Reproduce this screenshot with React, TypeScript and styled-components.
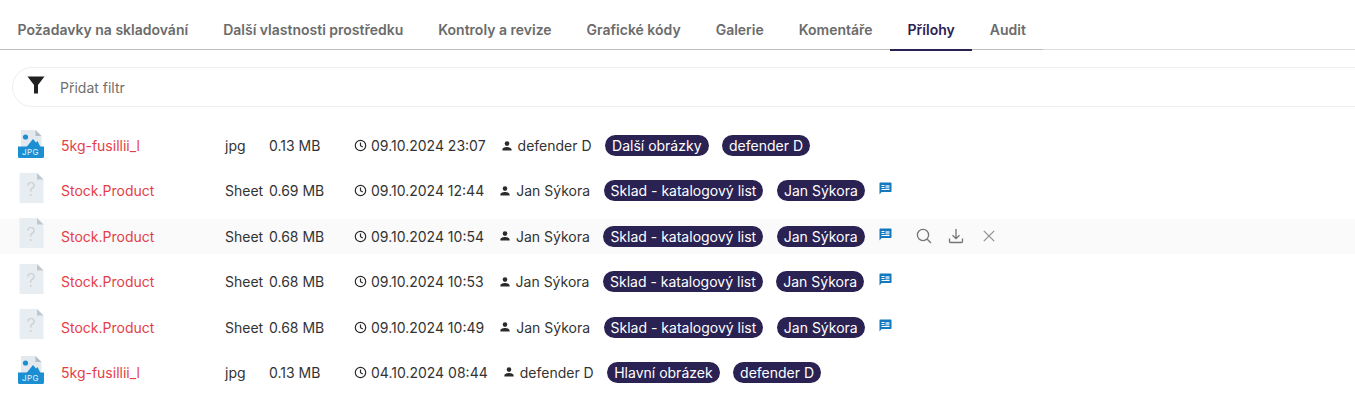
import styled, { createGlobalStyle } from 'styled-components';

const GlobalStyle = createGlobalStyle`
  html, body {
    margin: 0;
    padding: 0;
    background: #ffffff;
    overflow: hidden;
  }
  body {
    font-family: Inter, "Liberation Sans", sans-serif;
  }
`;

const tabs = [
  'Požadavky na skladování',
  'Další vlastnosti prostředku',
  'Kontroly a revize',
  'Grafické kódy',
  'Galerie',
  'Komentáře',
  'Přílohy',
  'Audit',
];

interface Attachment {
  kind: 'jpg' | 'unknown';
  name: string;
  type: string;
  size: string;
  date: string;
  author: string;
  tag: string;
  note?: boolean;
  hover?: boolean;
}

const attachments: Attachment[] = [
  { kind: 'jpg', name: '5kg-fusillii_l', type: 'jpg', size: '0.13 MB', date: '09.10.2024 23:07', author: 'defender D', tag: 'Další obrázky' },
  { kind: 'unknown', name: 'Stock.Product', type: 'Sheet', size: '0.69 MB', date: '09.10.2024 12:44', author: 'Jan Sýkora', tag: 'Sklad - katalogový list', note: true },
  { kind: 'unknown', name: 'Stock.Product', type: 'Sheet', size: '0.68 MB', date: '09.10.2024 10:54', author: 'Jan Sýkora', tag: 'Sklad - katalogový list', note: true, hover: true },
  { kind: 'unknown', name: 'Stock.Product', type: 'Sheet', size: '0.68 MB', date: '09.10.2024 10:53', author: 'Jan Sýkora', tag: 'Sklad - katalogový list', note: true },
  { kind: 'unknown', name: 'Stock.Product', type: 'Sheet', size: '0.68 MB', date: '09.10.2024 10:49', author: 'Jan Sýkora', tag: 'Sklad - katalogový list', note: true },
  { kind: 'jpg', name: '5kg-fusillii_l', type: 'jpg', size: '0.13 MB', date: '04.10.2024 08:44', author: 'defender D', tag: 'Hlavní obrázek' },
];

const FunnelIcon = () => (
  <svg width="18" height="18" viewBox="0 0 18 18">
    <path d="M0.5 0.5h17L11 9v8.5H7V9z" fill="#212121" />
  </svg>
);

const JpgIcon = () => (
  <svg width="27" height="28" viewBox="-0.5 0 27 28">
    <path d="M3.5 0h14.5l6 6v20h-20.500z" fill="#e3e9ee" />
    <path d="M18 0l6 6h-6z" fill="#b4bec6" />
    <circle cx="8" cy="7" r="2.6" fill="#1b8fd2" />
    <path d="M9 17l6.500-8 3 3.500 1.500-1.500 3 6z" fill="#1b8fd2" />
    <path d="M0.500 16.500h26v10a1.500 1.500 0 0 1-1.500 1.500h-23a1.500 1.500 0 0 1-1.500-1.500z" fill="#1b8fd2" />
    <text x="13" y="25" textAnchor="middle" fontSize="8" letterSpacing="0.5" fontFamily="Inter, sans-serif" fill="#e4f1fa">JPG</text>
  </svg>
);

const UnknownIcon = () => (
  <svg width="27" height="30" viewBox="0 0 27 30">
    <path d="M2.500 0h17.500l6.500 6.500v23.500h-24z" fill="#e8edf1" />
    <path d="M20 0l6.500 6.500h-6.500z" fill="#bfc7ce" />
    <text x="14" y="23" textAnchor="middle" fontSize="18" fontWeight="300" fontFamily="Inter, sans-serif" fill="#c9d0d6">?</text>
  </svg>
);

const ClockIcon = () => (
  <svg width="13" height="13" viewBox="0 0 13 13" fill="none" stroke="#2b2b2b" strokeWidth="1.2">
    <circle cx="6.500" cy="6.500" r="5.200" />
    <path d="M6.500 3.400v3.300l2.300 1.400" />
  </svg>
);

const PersonIcon = () => (
  <svg width="12" height="12" viewBox="0 0 12 12" fill="#2b2b2b">
    <circle cx="6" cy="3.600" r="2.300" />
    <path d="M1.400 10.500V9.400c0-1.500 3-2.300 4.600-2.300s4.600.8 4.600 2.300v1.100z" />
  </svg>
);

const NoteIcon = () => (
  <svg width="13" height="13" viewBox="0 0 13 13">
    <path d="M1.200 0.500h10.600a.7.7 0 0 1 .7.700v8a.7.7 0 0 1-.7.700H2.500L.5 12.500V1.200a.7.7 0 0 1 .7-.7z" fill="#1478bd" />
    <path d="M6.500 3h4v3.500h-4z" fill="#a9d2ee" />
    <path d="M2.500 3h3v1h-3zM2.500 5h3v1h-3zM2.500 7h8v1h-8z" fill="#ffffff" />
  </svg>
);

const SearchIcon = () => (
  <svg width="16" height="16" viewBox="0 0 16 16" fill="none" stroke="#757575" strokeWidth="1.3">
    <circle cx="7" cy="7" r="5.600" />
    <path d="M11.200 11.200l3.800 3.800" />
  </svg>
);

const DownloadIcon = () => (
  <svg width="16" height="16" viewBox="0 0 16 16" fill="none" stroke="#757575" strokeWidth="1.3">
    <path d="M8 1v9.500M4.500 7.200L8 10.700l3.500-3.500" />
    <path d="M1.500 10.500v3a1 1 0 0 0 1 1h11a1 1 0 0 0 1-1v-3" />
  </svg>
);

const CloseIcon = () => (
  <svg width="18" height="12" viewBox="-3 0 18 12" fill="none" stroke="#8f8f8f" strokeWidth="1.2">
    <path d="M.8.8l10.400 10.400M11.200.8L.8 11.200" />
  </svg>
);

const App = (): React.ReactElement => {
  return (
    <Page>
      <GlobalStyle />
      <TabBar>
        <TabStrip>
          {tabs.map(tab => (
            <Tab key={tab} $active={tab === 'Přílohy'}>
              {tab}
            </Tab>
          ))}
        </TabStrip>
      </TabBar>
      <FilterBar>
        <FunnelIcon />
        <FilterLabel>Přidat filtr</FilterLabel>
      </FilterBar>
      <List>
        {attachments.map(item => (
          <Row key={item.date} $hover={item.hover}>
            <FileIconCell $lift={item.kind === 'jpg' ? 4 : 6}>
              {item.kind === 'jpg' ? <JpgIcon /> : <UnknownIcon />}
            </FileIconCell>
            <FileName>{item.name}</FileName>
            <FileType>{item.type}</FileType>
            <FileSize>{item.size}</FileSize>
            <DateCell>
              <ClockIcon />
              {item.date}
            </DateCell>
            <AuthorCell>
              <PersonIcon />
              {item.author}
            </AuthorCell>
            <Pill>{item.tag}</Pill>
            <Pill>{item.author}</Pill>
            {item.note && (
              <NoteCell>
                <NoteIcon />
              </NoteCell>
            )}
            {item.hover && (
              <Actions>
                <SearchIcon />
                <DownloadIcon />
                <CloseIcon />
              </Actions>
            )}
          </Row>
        ))}
      </List>
    </Page>
  );
};

export default App;

const Page = styled.main`
  width: 1355px;
  height: 411px;
  overflow: hidden;
`;

const TabBar = styled.nav`
  height: 50px;
  box-sizing: border-box;
  border-bottom: 1px solid #dcdcdc;
`;

const TabStrip = styled.div`
  display: flex;
  width: 1043px;
  height: 50px;
  box-sizing: border-box;
  padding-top: 11px;
  border-bottom: 1px solid #bdbdbd;
`;

const Tab = styled.div<{ $active?: boolean }>`
  height: 38px;
  padding: 0 17.5px;
  font-size: 14px;
  font-weight: 600;
  line-height: 38px;
  white-space: nowrap;
  color: ${props => (props.$active ? '#2a2252' : '#6b6b6b')};
  border-bottom: 2px solid ${props => (props.$active ? '#2a2252' : 'transparent')};
`;

const FilterBar = styled.div`
  display: flex;
  align-items: center;
  gap: 15px;
  width: 1360px;
  height: 40px;
  box-sizing: border-box;
  margin: 17px 0 0 12px;
  padding: 0 0 4px 14px;
  border: 1px solid #eeeeee;
  border-radius: 20px 0 0 20px;
`;

const FilterLabel = styled.span`
  position: relative;
  top: 2px;
  font-size: 14px;
  color: #6f6f6f;
`;

const List = styled.div`
  display: flex;
  flex-direction: column;
  gap: 10.4px;
  margin-top: 21px;
`;

const Row = styled.div<{ $hover?: boolean }>`
  display: flex;
  align-items: center;
  height: 35px;
  padding-left: 17px;
  font-size: 14px;
  color: #333333;
  white-space: nowrap;
  background: ${props => (props.$hover ? '#fafafa' : 'transparent')};
`;

const FileIconCell = styled.div<{ $lift: number }>`
  display: flex;
  width: 44px;
  margin-top: -${props => props.$lift}px;
`;

const FileName = styled.div`
  width: 164px;
  color: #e53e46;
`;

const FileType = styled.div`
  width: 44px;
`;

const FileSize = styled.div`
  width: 85px;
`;

const DateCell = styled.div`
  display: flex;
  align-items: center;
  gap: 4px;
  margin-right: 15px;
`;

const AuthorCell = styled.div`
  display: flex;
  align-items: center;
  gap: 5px;
  margin-right: 13.5px;
`;

const Pill = styled.span`
  height: 21px;
  margin-right: 13.5px;
  padding: 0 7px;
  border-radius: 11px;
  font-size: 14px;
  line-height: 21px;
  color: #ffffff;
  background: #2a2252;
`;

const NoteCell = styled.div`
  display: flex;
  margin: -4px 0 0 1px;
`;

const Actions = styled.div`
  display: flex;
  align-items: center;
  gap: 16px;
  margin-left: 24px;
`;
